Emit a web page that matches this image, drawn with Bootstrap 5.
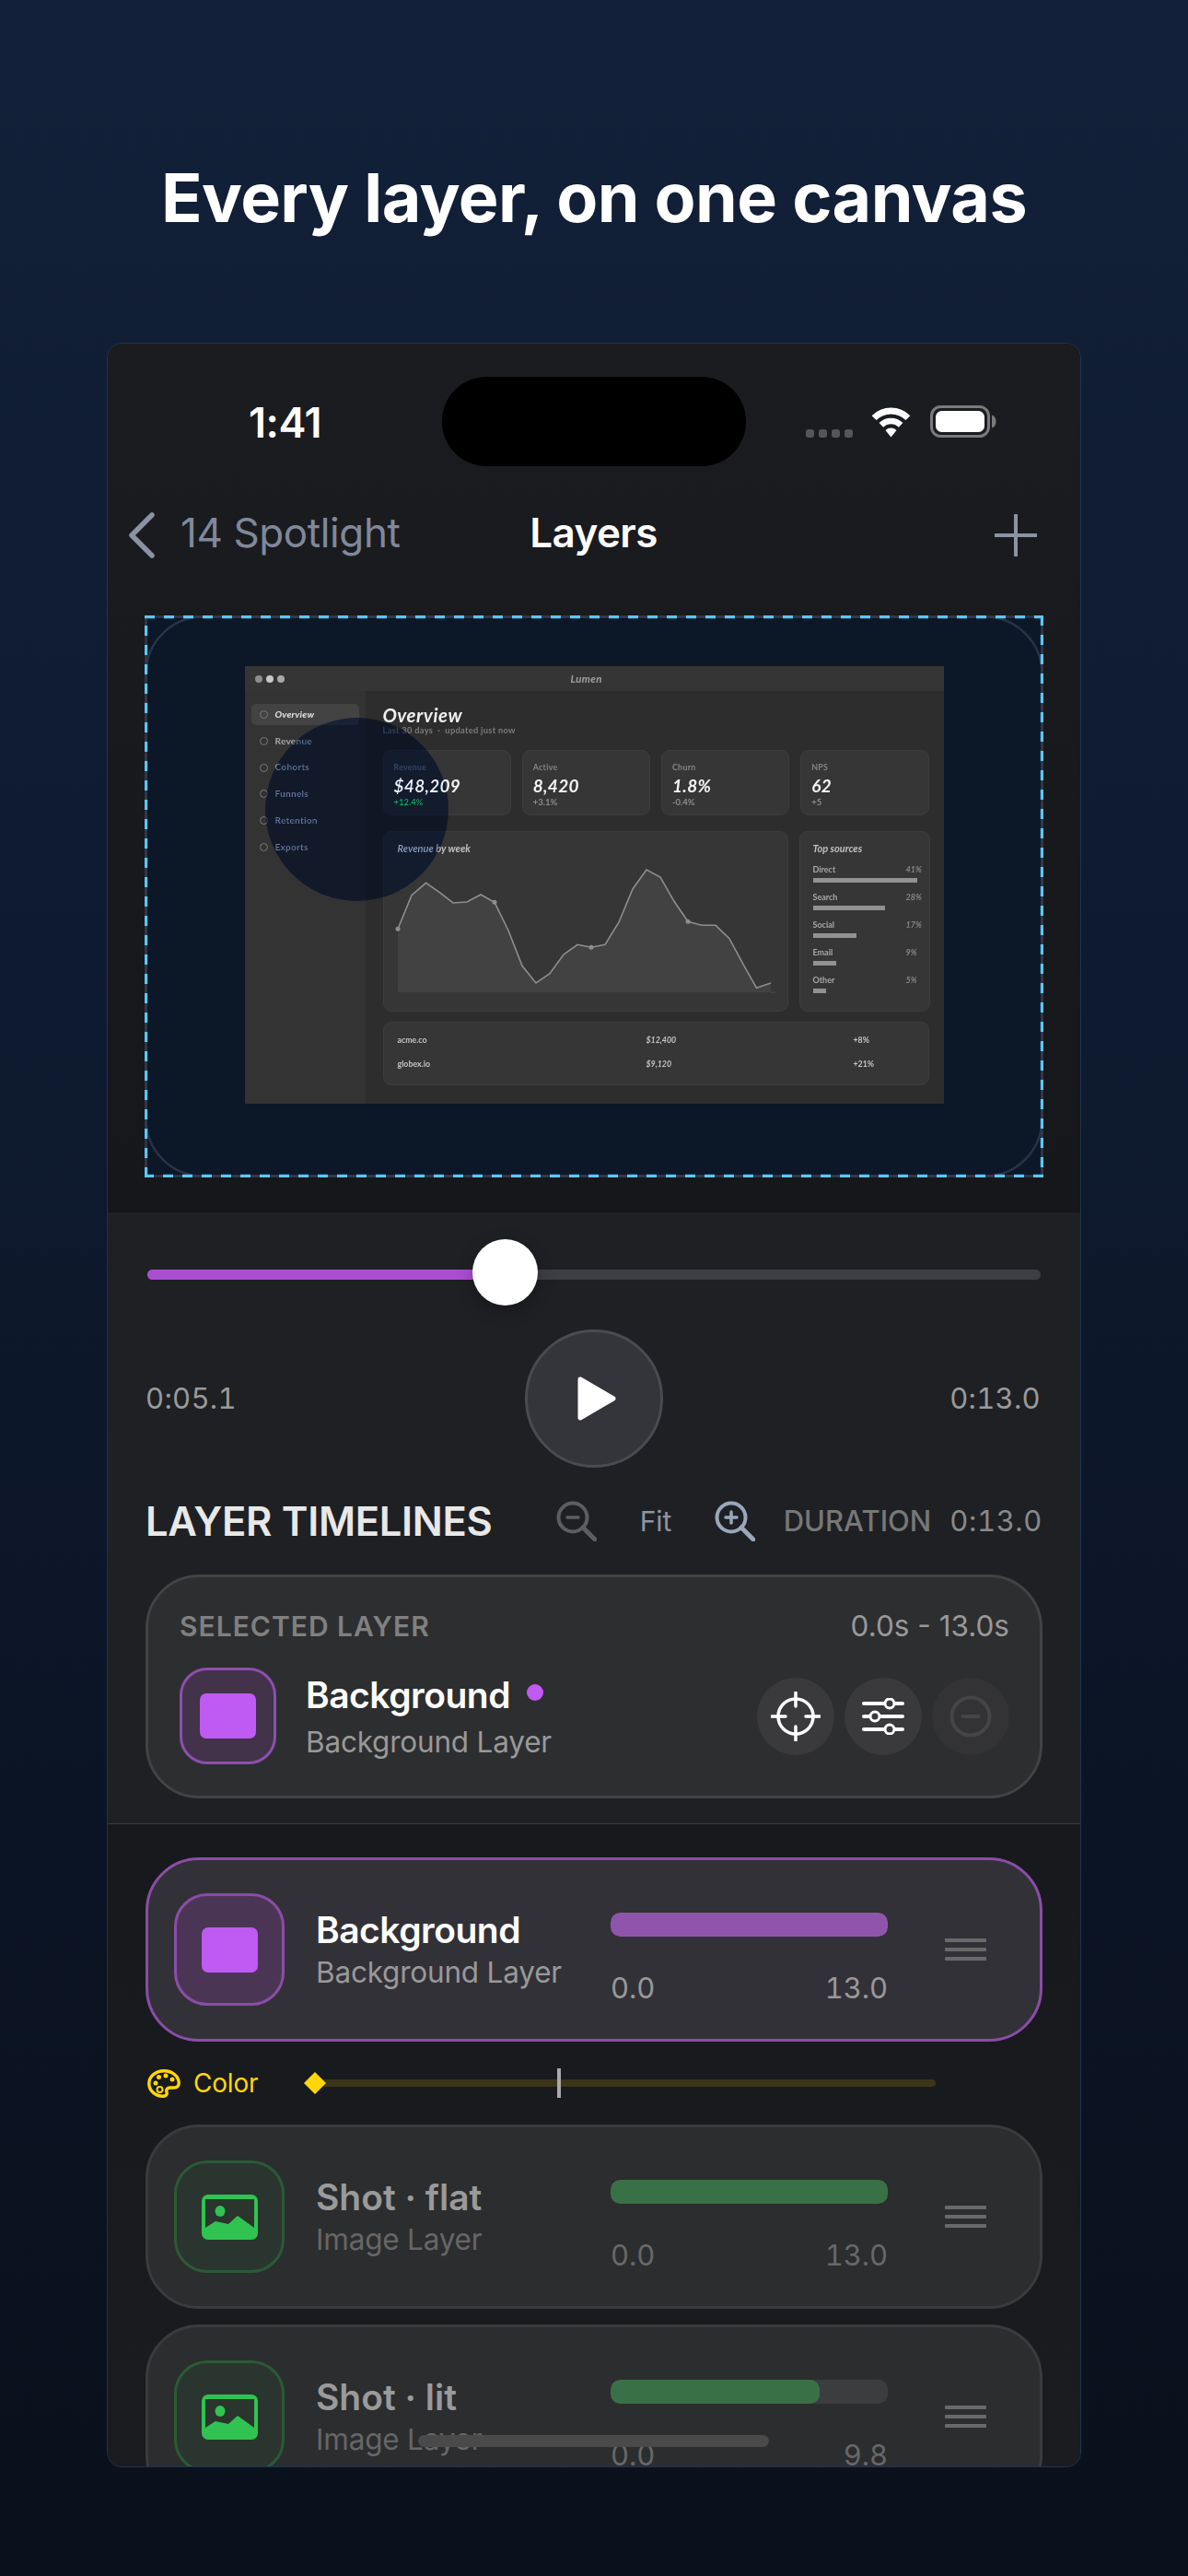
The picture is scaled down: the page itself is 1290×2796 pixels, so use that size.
<!DOCTYPE html>
<html lang="en">
<head>
<meta charset="utf-8">
<title>Layers</title>
<link href="https://cdn.jsdelivr.net/npm/bootstrap@5.3.0/dist/css/bootstrap.min.css" rel="stylesheet">
<style>
html,body{margin:0;height:2796px;overflow:hidden}
body{background:linear-gradient(180deg,#122039 0%,#0e1a2f 40%,#0b1424 72%,#0a111c 100%);font-family:Inter,"Liberation Sans",sans-serif;color:#fff}
.hero{height:372px;padding-top:172px;font-size:73.500px;line-height:86px;font-weight:700;letter-spacing:-.6px;text-align:center}
.phone{margin-left:116px;width:1058px;height:2306px;border:1px solid #1f3350;border-radius:16px;overflow:hidden;position:relative;background:#1a1b1e}
.topzone{background:linear-gradient(180deg,#1b1c20 0%,#191a1e 40%,#15171b 100%);padding-bottom:38px}
.statusbar{padding-top:36px;height:133px}
.clock{width:363px;padding-left:22px;text-align:center;font-size:45px;font-weight:600;letter-spacing:-.5px}
.island{width:330px;height:97px;border-radius:48px;background:#000}
.sigdot{width:9px;height:9px;border-radius:3px;background:#55565a}
.navline{margin-top:44px;height:60px;display:grid;grid-template-columns:1fr auto 1fr;align-items:center;padding:0 23px 0 22px}
.backlabel{font-size:44px;color:#80889a;margin:-5px 0 0 27px;letter-spacing:-.4px}
.navtitle{font-size:44px;font-weight:600;letter-spacing:-.6px;margin-top:-5px}
.previewbox{margin:58px 0 0 40px;width:976px;height:610px;padding-top:55px;background:#0c1727;position:relative}
.dashes{position:absolute;left:0;top:0}
.mock{width:759px;height:475px;background:#2d2d2d;position:relative;isolation:isolate;overflow:hidden;font-family:Lato,"Liberation Sans",sans-serif;filter:blur(.35px)}
.mockbar{height:27px;background:#353535;padding-left:11px;position:relative}
.mockdot{width:8px;height:8px;border-radius:50%}
.mockname{position:absolute;left:354px;top:7px;font-size:11.5px;line-height:14px;font-weight:700;font-style:italic;color:#a0a0a0;letter-spacing:.4px}
.mockside{width:131px;height:448px;background:#333;padding:14px 7px}
.sideitem{height:23px;padding-left:9px;margin-bottom:5.8px;border-radius:5px;font-size:10.2px;font-weight:700;color:#a6a6a6;display:flex;align-items:center;gap:8px;letter-spacing:.2px}
.sideitem i{width:9px;height:9px;border:1px solid #7a7a7a;border-radius:50%;display:block}
.sideitem.on{background:#434343;color:#e4e4e4;font-style:italic}
.mockmain{width:628px;padding:15px 16px 0 19px}
.mockh{font-size:20.5px;line-height:22px;font-weight:700;font-style:italic;letter-spacing:.5px;color:#f0f0f0}
.mocksub{font-size:9.3px;line-height:12px;font-weight:700;color:#7c7c7c;letter-spacing:.3px}
.kpis{display:grid;grid-template-columns:repeat(4,1fr);gap:12px;margin-top:15px}
.mcard{background:#363636;border:1px solid #3d3d3d;border-radius:9px}
.kpi{height:71px;padding:12px 11px 0}
.klabel{font-size:8.8px;line-height:12px;font-weight:700;color:#858585;letter-spacing:.3px}
.kval{font-size:19px;line-height:22px;margin-top:3px;font-weight:700;font-style:italic;color:#f4f4f4;letter-spacing:.3px}
.kdelta{font-size:9.5px;line-height:12px;margin-top:1px;font-weight:700;color:#8d8d8d}
.chartrow{display:grid;grid-template-columns:440px 142px;gap:12px;margin-top:17px}
.chartcard{height:196px;padding:11px 15px;position:relative}
.ctitle{font-size:11px;line-height:14px;font-weight:700;font-style:italic;color:#c0c0c0}
.srccard{height:196px;padding:11px 14px}
.srcrow{margin-top:7px;height:23px;font-size:9px;line-height:11px;font-weight:700;color:#a8a8a8;position:relative}
.srcrow b{position:absolute;left:101px;top:0;font-weight:700;font-style:italic;color:#858585}
.srcbar{height:5px;background:#929292;margin-top:4px}
.tblcard{height:69px;margin-top:11px;padding:6px 15px;font-size:8.8px;font-weight:700;color:#c4c4c4}
.tblrow{display:grid;grid-template-columns:270px 225px 1fr;height:26px;align-items:center}
.spot{position:absolute;left:22px;top:56px;width:199px;height:199px;border-radius:50%;background:#2d4166;mix-blend-mode:overlay;z-index:5}
.controls{background:#1e2024;padding:62px 43px 27px 43px;height:664px;border-bottom:1px solid #3a3b3e}
.scrub{height:11px;border-radius:6px;background:#3d3e44;position:relative}
.scrubfill{height:11px;border-radius:6px 0 0 6px;background:#a94fd0}
.thumb{position:absolute;top:-33px;width:71px;height:72px;border-radius:50%;background:#fff;box-shadow:0 6px 18px rgba(0,0,0,.25)}
.playline{margin-top:54px;display:grid;grid-template-columns:1fr auto 1fr;align-items:center;font-size:31px;color:#9a9a9a;font-variant-numeric:tabular-nums;letter-spacing:.3px}
.playbtn{width:150px;height:150px;border-radius:50%;background:#34353a;border:3px solid #4a4b50}
.timehead{height:60px;margin:28px 0 0 -2px;font-size:30px;line-height:60px}
.tl-title{font-size:43.500px;font-weight:600;color:#e8e8e8;letter-spacing:-.3px;margin-right:69px}
.selcard{margin:28px 0 0 -2px;width:974px;height:243px;border:3px solid #424345;border-radius:58px;background:#2d2e30;padding:33px 33px 0 34px}
.selhead{height:40px;line-height:40px;font-size:30px}
.tile{width:105px;height:105px;border-radius:30px;background:#42324a;border:3px solid #8c4fae}
.tilebig{width:120px;height:122px;border-radius:36px;background:#4a3654;border:3px solid #8a4da8}
.tilegreen{background:#2b352f;border-color:#2a5a36}
.swatch{width:61px;height:49px;border-radius:7px;background:#bf5af2;display:block}
.lname{font-size:39px;line-height:48px;font-weight:600;letter-spacing:-.5px}
.lsub{font-size:31.500px;line-height:44px;color:#999;letter-spacing:-.2px}
.round{width:84px;height:84px;border-radius:50%;background:#3a3a3c}
.listzone{padding:36px 41px 0 41px;background:linear-gradient(180deg,#18191d 0%,#1b1c1f 100%);height:800px}
.layerrow{height:200px;border:3px solid #3a3b3d;border-radius:58px;background:#2c2d2f;padding-left:28px;display:flex;align-items:center}
.layerrow.chosen{border-color:#8a4da8;background:#333138}
.ltext{width:320px;margin-left:34px;margin-top:2px}
.lbarcol{width:301px;margin-top:22px}
.lbar{height:26px;border-radius:10px;background:#3c3d3f;overflow:hidden}
.lfill{height:26px;border-radius:10px;background:#3a7046}
.chosen .lfill{background:#8f55ad}
.lnums{margin-top:36px;line-height:40px;font-size:31px;color:#686868;letter-spacing:-.1px;font-variant-numeric:tabular-nums}
.chosen .lnums,.chosen .lsub{color:#999}
.dim{color:#9a9a9a;letter-spacing:0}
.dimsub{color:#666}
.grip{margin-left:62px;width:45px;display:flex;flex-direction:column;gap:6px}
.grip i{display:block;height:4px;border-radius:1px;background:#69696b}
.colorline{margin:29px 0;height:32px;position:relative;color:#ffd60a;font-size:28px;padding-left:2px}
.colortrack{position:absolute;left:182px;width:676px;top:12px;height:8px;border-radius:4px;background:#3b3519}
.colortick{position:absolute;left:447px;top:0;width:4px;height:32px;background:#aaa}
.diamond{position:absolute;left:172px;top:4px}
.homebar{position:absolute;left:337px;bottom:21px;width:381px;height:13px;border-radius:7px;background:#4a4a4a}
</style>
</head>
<body>
<div class="hero">Every layer, on one canvas</div>
<div class="phone">
  <div class="topzone">
    <div class="statusbar d-flex">
      <div class="clock align-self-center" style="margin-top:2px">1:41</div>
      <div class="island"></div>
      <div class="d-flex align-items-end" style="margin-left:65px;height:66px">
        <div class="d-flex" style="gap:5px"><span class="sigdot"></span><span class="sigdot"></span><span class="sigdot"></span><span class="sigdot"></span></div>
        <svg width="45" height="34" viewBox="0 0 45 34" style="margin-left:19px"><path d="M4.1 12.6A26 26 0 0 1 40.9 12.6" fill="none" stroke="#fff" stroke-width="7"/><path d="M11.9 20.4A15 15 0 0 1 33.1 20.4" fill="none" stroke="#fff" stroke-width="6.5"/><path d="M16.5 26A8.5 8.5 0 0 1 28.5 26L22.5 33.5Z" fill="#fff"/></svg>
        <svg width="72" height="35" viewBox="0 0 72 35" style="margin-left:20px"><rect x="1.5" y="1.5" width="62" height="32" rx="10" fill="none" stroke="#7a7a7a" stroke-width="3"/><rect x="6" y="6" width="53" height="23" rx="6.5" fill="#fff"/><path d="M67 10.5c3 1 4.500 3.500 4.500 7s-1.500 6-4.500 7Z" fill="#7a7a7a"/></svg>
      </div>
    </div>
    <div class="navline">
      <div class="d-flex align-items-center">
        <svg width="30" height="50" viewBox="0 0 30 50"><path d="M26 3L4 25l22 22" fill="none" stroke="#8b93a3" stroke-width="5.500" stroke-linecap="round" stroke-linejoin="round"/></svg>
        <span class="backlabel">14 Spotlight</span>
      </div>
      <div class="navtitle">Layers</div>
      <div class="d-flex justify-content-end" style="margin-right:24px">
        <svg width="46" height="46" viewBox="0 0 46 46"><path d="M23 1v44M1 23h44" stroke="#8b93a3" stroke-width="4" stroke-linecap="round"/></svg>
      </div>
    </div>
    <div class="previewbox d-flex justify-content-center">
      <div class="mock">
        <div class="mockbar d-flex align-items-center gap-1"><span class="mockdot" style="background:#8d8d8d"></span><span class="mockdot" style="background:#c8c8c8"></span><span class="mockdot" style="background:#a8a8a8"></span><span class="mockname">Lumen</span></div>
        <div class="d-flex">
          <div class="mockside">
            <div class="sideitem on"><i></i>Overview</div>
            <div class="sideitem"><i></i>Revenue</div>
            <div class="sideitem"><i></i>Cohorts</div>
            <div class="sideitem"><i></i>Funnels</div>
            <div class="sideitem"><i></i>Retention</div>
            <div class="sideitem"><i></i>Exports</div>
          </div>
          <div class="mockmain">
            <div class="mockh">Overview</div>
            <div class="mocksub">Last 30 days &nbsp;·&nbsp; updated just now</div>
            <div class="kpis">
              <div class="mcard kpi"><div class="klabel">Revenue</div><div class="kval">$48,209</div><div class="kdelta" style="color:#2ecc71">+12.4%</div></div>
              <div class="mcard kpi"><div class="klabel">Active</div><div class="kval">8,420</div><div class="kdelta">+3.1%</div></div>
              <div class="mcard kpi"><div class="klabel">Churn</div><div class="kval">1.8%</div><div class="kdelta">-0.4%</div></div>
              <div class="mcard kpi"><div class="klabel">NPS</div><div class="kval">62</div><div class="kdelta">+5</div></div>
            </div>
            <div class="chartrow">
              <div class="mcard chartcard">
                <div class="ctitle">Revenue by week</div>
                <svg width="412" height="142" viewBox="0 0 412 142" style="display:block;margin-top:13px;overflow:visible">
                  <path d="M0 67.3L15 30.700 30.500 17.300 45 27.300 60 39 75 38 90 30 105 38.300 120 69 135 107.300 150 126 165 115.700 180 95 195 84.300 210 87.300 225 84.300 240 60 255 24 270 3 285 11 300 37.300 315 59.300 330 63.300 345 63.300 360 77.700 375 105.700 389.500 131.300 405 126V136H0Z" fill="#424242"/>
                  <path d="M405 136H410" stroke="#4a4a4a"/>
                  <path d="M0 67.3L15 30.700 30.500 17.300 45 27.300 60 39 75 38 90 30 105 38.300 120 69 135 107.300 150 126 165 115.700 180 95 195 84.300 210 87.300 225 84.300 240 60 255 24 270 3 285 11 300 37.300 315 59.300 330 63.300 345 63.300 360 77.700 375 105.700 389.500 131.300 405 126" fill="none" stroke="#8e8e8e" stroke-width="1.6"/>
                  <g fill="#8e8e8e"><circle cx="0" cy="67.3" r="2.5"/><circle cx="105" cy="38.3" r="2.500"/><circle cx="210" cy="87.3" r="2.500"/><circle cx="315" cy="59.3" r="2.500"/></g>
                </svg>
              </div>
              <div class="mcard srccard">
                <div class="ctitle" style="margin-bottom:10px">Top sources</div>
                <div class="srcrow">Direct<b>41%</b><div class="srcbar" style="width:113px"></div></div>
                <div class="srcrow">Search<b>28%</b><div class="srcbar" style="width:78px"></div></div>
                <div class="srcrow">Social<b>17%</b><div class="srcbar" style="width:47px"></div></div>
                <div class="srcrow">Email<b>9%</b><div class="srcbar" style="width:25px"></div></div>
                <div class="srcrow">Other<b>5%</b><div class="srcbar" style="width:14.500px"></div></div>
              </div>
            </div>
            <div class="mcard tblcard">
              <div class="tblrow"><span>acme.co</span><em>$12,400</em><span>+8%</span></div>
              <div class="tblrow"><span>globex.io</span><em>$9,120</em><span>+21%</span></div>
            </div>
          </div>
        </div>
        <div class="spot"></div>
      </div>
      <svg class="dashes" width="976" height="610" viewBox="0 0 976 610">
        <rect x="1.5" y="1.500" width="973" height="607" rx="62" fill="none" stroke="#2a3345" stroke-width="2.500"/>
        <rect x="1.5" y="1.500" width="973" height="607" fill="none" stroke="#333b4b" stroke-width="2.500"/>
        <g stroke="#5ac8fa" stroke-width="3.400" stroke-dasharray="11 10" fill="none">
          <path d="M0 1.500H976"/><path d="M974.500 0V610"/><path d="M976 608.500H0"/><path d="M1.500 610V0"/>
        </g>
      </svg>
    </div>
  </div>

  <div class="controls">
    <div class="scrub">
      <div class="scrubfill" style="width:37%"></div>
      <div class="thumb" style="left:353px"></div>
    </div>
    <div class="playline">
      <span style="margin-left:-2px">0:05.1</span>
      <div class="playbtn d-flex align-items-center justify-content-center">
        <svg width="42" height="48" viewBox="0 0 42 48" style="margin-left:6px"><path d="M3 3L39 24 3 45Z" fill="#fff" stroke="#fff" stroke-width="5" stroke-linejoin="round"/></svg>
      </div>
      <span class="text-end">0:13.0</span>
    </div>
    <div class="timehead d-flex align-items-center">
      <span class="tl-title">LAYER TIMELINES</span>
      <svg width="44" height="44" viewBox="0 0 44 44"><circle cx="18" cy="18" r="15.500" fill="none" stroke="#5c5e62" stroke-width="4"/><path d="M29 29L42 42" stroke="#5c5e62" stroke-width="5" stroke-linecap="round"/><path d="M12 18h12" stroke="#5c5e62" stroke-width="3.500" stroke-linecap="round"/></svg>
      <span style="color:#8d94a3;margin-left:47px;font-size:30px">Fit</span>
      <svg width="44" height="44" viewBox="0 0 44 44" style="margin-left:47px"><circle cx="18" cy="18" r="15.500" fill="none" stroke="#9aa7bb" stroke-width="4"/><path d="M29 29L42 42" stroke="#9aa7bb" stroke-width="5" stroke-linecap="round"/><path d="M12 18h12M18 12v12" stroke="#9aa7bb" stroke-width="3.500" stroke-linecap="round"/></svg>
      <span style="color:#777;margin-left:auto;font-weight:500;font-size:31px">DURATION</span>
      <span style="color:#8a8a8a;margin-left:20px;font-size:31px;letter-spacing:.6px;font-variant-numeric:tabular-nums;margin-right:-2px">0:13.0</span>
    </div>
    <div class="selcard">
      <div class="selhead d-flex justify-content-between"><span style="color:#808080;font-weight:600;letter-spacing:1px">SELECTED LAYER</span><span style="color:#999;font-size:31.500px">0.0s - 13.0s</span></div>
      <div class="d-flex align-items-center" style="margin-top:25px">
        <div class="tile d-flex align-items-center justify-content-center flex-shrink-0"><span class="swatch"></span></div>
        <div style="margin-left:32px;margin-top:4px">
          <div class="d-flex align-items-center"><span class="lname">Background</span><span style="width:18px;height:18px;border-radius:50%;background:#bf5af2;margin-left:18px;margin-top:-6px"></span></div>
          <div class="lsub" style="margin-top:5px">Background Layer</div>
        </div>
        <div class="ms-auto d-flex" style="gap:11px">
          <div class="round d-flex align-items-center justify-content-center">
            <svg width="54" height="54" viewBox="0 0 54 54"><circle cx="27" cy="27" r="19" fill="none" stroke="#fff" stroke-width="3.500"/><path d="M27 1v15M27 38v15M1 27h15M38 27h15" stroke="#fff" stroke-width="3.500" stroke-linecap="round"/></svg>
          </div>
          <div class="round d-flex align-items-center justify-content-center">
            <svg width="46" height="40" viewBox="0 0 46 40"><g stroke="#fff" stroke-width="4" stroke-linecap="round"><path d="M2 6h42M2 20h42M2 34h42"/></g><g fill="#3a3a3c" stroke="#fff" stroke-width="3"><circle cx="30" cy="6" r="5"/><circle cx="14" cy="20" r="5"/><circle cx="30" cy="34" r="5"/></g></svg>
          </div>
          <div class="round d-flex align-items-center justify-content-center" style="background:#333335">
            <svg width="46" height="46" viewBox="0 0 46 46"><circle cx="23" cy="23" r="20.500" fill="none" stroke="#454547" stroke-width="4"/><path d="M13 23h20" stroke="#454547" stroke-width="4"/></svg>
          </div>
        </div>
      </div>
    </div>
  </div>

  <div class="listzone">
    <div class="layerrow chosen">
      <div class="tilebig d-flex align-items-center justify-content-center flex-shrink-0"><span class="swatch"></span></div>
      <div class="ltext"><div class="lname">Background</div><div class="lsub">Background Layer</div></div>
      <div class="lbarcol"><div class="lbar"><div class="lfill" style="width:100%"></div></div><div class="lnums d-flex justify-content-between"><span>0.0</span><span>13.0</span></div></div>
      <div class="grip"><i></i><i></i><i></i></div>
    </div>
    <div class="colorline d-flex align-items-center">
      <svg width="36" height="31" viewBox="0 0 36 31"><path d="M18 1.800C8 1.800 1.800 8.500 1.800 15.500 1.800 23.500 9 29.200 17 29.200c3.500 0 4.800-2 4-4.500-.9-2.800.7-4.700 3.500-4.700h4.500c3.500 0 5.200-2.300 5.200-5C34.200 8 27.500 1.800 18 1.800Z" fill="none" stroke="#ffd60a" stroke-width="3.400"/><g fill="#ffd60a"><circle cx="9" cy="15" r="2.500"/><circle cx="12.500" cy="8.500" r="2.500"/><circle cx="20" cy="7" r="2.500"/><circle cx="27" cy="11" r="2.500"/></g><circle cx="13.500" cy="22" r="3" fill="none" stroke="#ffd60a" stroke-width="2"/></svg>
      <span style="margin-left:14px;letter-spacing:-.2px">Color</span>
      <div class="colortrack"></div>
      <div class="colortick"></div>
      <svg class="diamond" width="24" height="24" viewBox="0 0 24 24"><path d="M12 0L24 12 12 24 0 12Z" fill="#ffd60a"/></svg>
    </div>
    <div class="layerrow">
      <div class="tilebig tilegreen d-flex align-items-center justify-content-center flex-shrink-0">
        <svg width="61" height="49" viewBox="0 0 61 49"><rect width="61" height="49" rx="7" fill="#30c352"/><path d="M4 5H57V36L39 23 29 32 15 29 4 36Z" fill="#2a352d"/><ellipse cx="20" cy="18" rx="5.500" ry="6" fill="#30c352"/></svg>
      </div>
      <div class="ltext"><div class="lname dim">Shot · flat</div><div class="lsub dimsub">Image Layer</div></div>
      <div class="lbarcol"><div class="lbar"><div class="lfill" style="width:100%"></div></div><div class="lnums d-flex justify-content-between"><span>0.0</span><span>13.0</span></div></div>
      <div class="grip"><i></i><i></i><i></i></div>
    </div>
    <div class="layerrow" style="margin-top:17px">
      <div class="tilebig tilegreen d-flex align-items-center justify-content-center flex-shrink-0">
        <svg width="61" height="49" viewBox="0 0 61 49"><rect width="61" height="49" rx="7" fill="#30c352"/><path d="M4 5H57V36L39 23 29 32 15 29 4 36Z" fill="#2a352d"/><ellipse cx="20" cy="18" rx="5.500" ry="6" fill="#30c352"/></svg>
      </div>
      <div class="ltext"><div class="lname dim">Shot · lit</div><div class="lsub dimsub">Image Layer</div></div>
      <div class="lbarcol"><div class="lbar"><div class="lfill" style="width:75.4%"></div></div><div class="lnums d-flex justify-content-between"><span>0.0</span><span>9.8</span></div></div>
      <div class="grip"><i></i><i></i><i></i></div>
    </div>
  </div>
  <div class="homebar"></div>
</div>
<script src="https://cdn.jsdelivr.net/npm/bootstrap@5.3.0/dist/js/bootstrap.bundle.min.js"></script>
</body>
</html>
